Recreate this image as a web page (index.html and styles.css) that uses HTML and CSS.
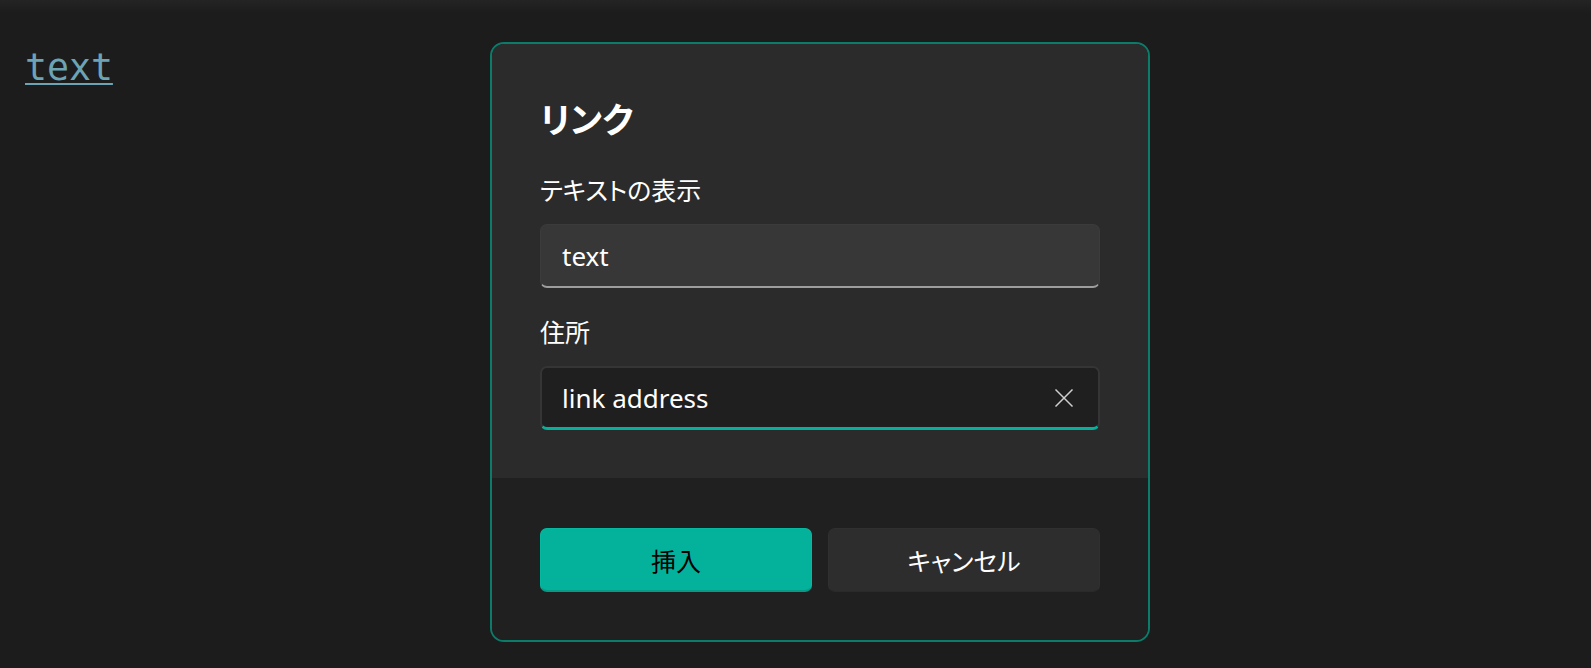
FILE: index.html
```html
<!DOCTYPE html>
<html lang="ja">
<head>
<meta charset="utf-8">
<title>リンク</title>
<link rel="stylesheet" href="styles.css">
</head>
<body>
  <main class="doc">
    <a class="doc-link" href="#">text</a>
  </main>

  <div class="dialog" role="dialog" aria-labelledby="dlg-title">
    <div class="dialog-body">
      <h1 class="dialog-title" id="dlg-title">リンク</h1>
      <label class="field-label" for="f-text">テキストの表示</label>
      <div class="textbox">
        <input id="f-text" class="textbox-input" type="text" value="text">
      </div>
      <label class="field-label field-label-2" for="f-addr">住所</label>
      <div class="textbox textbox-focused">
        <input id="f-addr" class="textbox-input" type="text" value="link address">
        <button class="clear-btn" type="button" aria-label="クリア">
          <svg width="18" height="18" viewBox="0 0 18 18" aria-hidden="true">
            <path d="M1 1 L17 17 M17 1 L1 17" stroke="#cfcfcf" stroke-width="1.5" fill="none" stroke-linecap="square"/>
          </svg>
        </button>
      </div>
    </div>
    <div class="dialog-footer">
      <button class="btn btn-primary" type="button">挿入</button>
      <button class="btn btn-secondary" type="button">キャンセル</button>
    </div>
  </div>
</body>
</html>
```
FILE: styles.css
```css
html, body {
  margin: 0;
  padding: 0;
}

body {
  width: 1591px;
  height: 668px;
  overflow: hidden;
  background: linear-gradient(to bottom, #242424 0px, #1f1f1f 8px, #1c1c1c 14px, #1c1c1c 100%);
  font-family: "Noto Sans", "Noto Sans CJK JP", sans-serif;
  color: #ffffff;
  position: relative;
}

.doc {
  padding: 47px 0 0 25px;
}

.doc-link {
  font-family: "DejaVu Sans Mono", "Liberation Mono", monospace;
  font-size: 36.5px;
  line-height: 42px;
  color: #6ca4b6;
  text-decoration: underline;
  text-decoration-thickness: 2px;
  text-underline-offset: 3px;
}

.dialog {
  position: absolute;
  left: 490px;
  top: 42px;
  width: 656px;
  border: 2px solid #0b7b6a;
  border-radius: 14px;
  overflow: hidden;
  background: #202020;
  display: flex;
  flex-direction: column;
}

.dialog-body {
  background: #2b2b2b;
  padding: 48px;
  display: flex;
  flex-direction: column;
}

.dialog-title {
  margin: 0 0 24px 0;
  font-size: 35px;
  line-height: 56px;
  font-weight: 700;
  font-feature-settings: "palt";
  color: #ffffff;
}

.field-label {
  display: block;
  font-size: 25px;
  line-height: 36px;
  font-feature-settings: "palt";
  margin-bottom: 16px;
  color: #ffffff;
}

.field-label-2 {
  margin-top: 26px;
}

.textbox {
  box-sizing: border-box;
  height: 64px;
  display: flex;
  align-items: center;
  background: #373737;
  border: 1px solid #3b3b3b;
  border-bottom: 2px solid #9d9d9d;
  border-radius: 7px;
  padding: 0 0 0 21px;
}

.textbox-focused {
  background: #1f1f1f;
  border: 2px solid #353535;
  border-bottom: 3px solid #05b19b;
  padding-left: 20px;
}

.textbox-input {
  flex: 1;
  min-width: 0;
  border: 0;
  outline: none;
  background: transparent;
  color: #ffffff;
  font-family: "Noto Sans", "Noto Sans CJK JP", sans-serif;
  font-size: 26px;
  line-height: 36px;
  padding: 0;
  margin: 0;
}

.clear-btn {
  width: 46px;
  height: 100%;
  margin-right: 11px;
  border: 0;
  background: transparent;
  padding: 0;
  display: flex;
  align-items: center;
  justify-content: center;
  cursor: pointer;
}

.dialog-footer {
  background: #202020;
  padding: 50px 48px 48px 48px;
  display: flex;
  gap: 16px;
}

.btn {
  flex: 1;
  height: 64px;
  border-radius: 7px;
  font-family: "Noto Sans", "Noto Sans CJK JP", sans-serif;
  font-size: 25px;
  font-feature-settings: "palt";
  padding: 0;
  cursor: pointer;
}

.btn-primary {
  background: #04b29c;
  color: #000000;
  border: 1px solid #07b8a1;
  border-bottom: 2px solid #079a87;
}

.btn-secondary {
  background: #2d2d2d;
  color: #ffffff;
  border: 1px solid #303030;
  border-bottom-color: #2a2a2a;
}
```
